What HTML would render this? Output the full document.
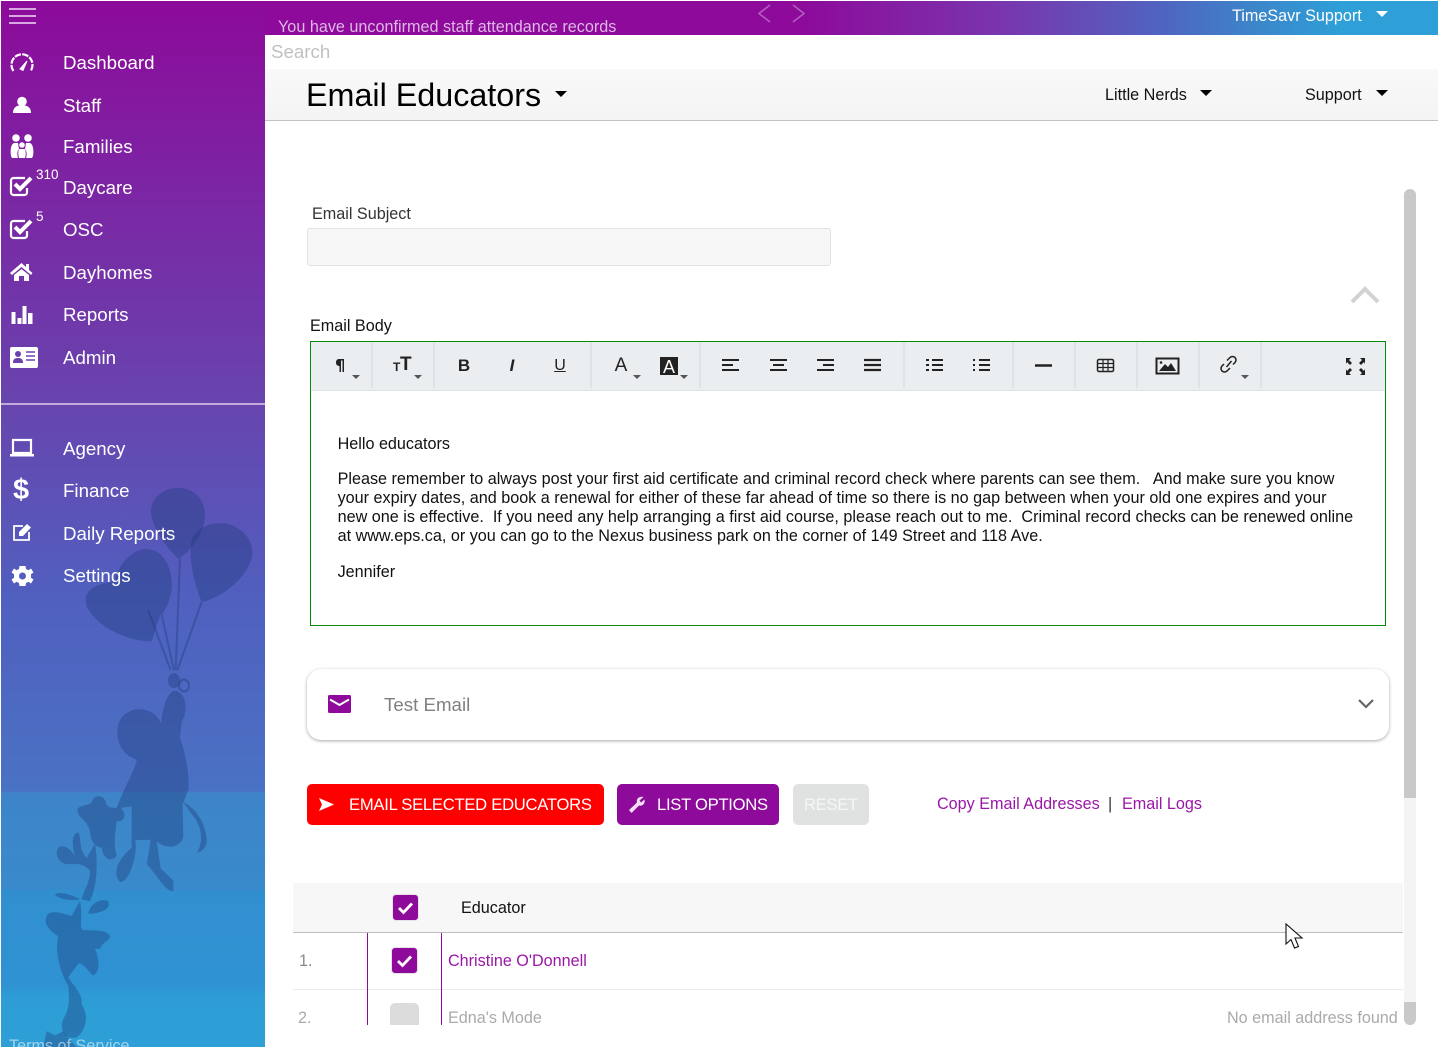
<!DOCTYPE html>
<html><head><meta charset="utf-8"><title>Email Educators</title>
<style>
html,body{margin:0;padding:0;background:#fff}
body{width:1438px;height:1047px;position:relative;overflow:hidden;font-family:"Liberation Sans",Arial,sans-serif;color:#111}
.a,.t{position:absolute}
.t{white-space:pre;line-height:20px;font-size:16.18px}
#side{position:absolute;left:1px;top:1px;width:264px;height:1046px;overflow:hidden;background:linear-gradient(180deg,#8d0a9a 0,#6844ae 400px,#5060bf 600px,#4a72c4 790px,#3e84c9 792px,#398acb 888px,#318fd0 890px,#2f92d2 985px,#2e9dd6 995px,#2e9fd7 1046px)}
#top{position:absolute;left:1px;top:1px;width:1437px;height:34px;background:linear-gradient(90deg,#8d0a9a 0,#8d0a9a 800px,#7a35ad 1000px,#4f64c0 1160px,#3d84c9 1250px,#2e9fd7 1340px)}
.m{color:#fff;font-size:18.72px;left:63px}
.d{position:absolute;width:0;height:0;border-left:6px solid transparent;border-right:6px solid transparent;border-top:6px solid #000}
.sep{position:absolute;top:342px;height:46px;width:2px;background:#dde3e6}
.tb{position:absolute;line-height:20px;color:#222;text-align:center;white-space:pre}
.car{position:absolute;width:0;height:0;border-left:4px solid transparent;border-right:4px solid transparent;border-top:4px solid #555;top:375px}
.cb{position:absolute;width:27px;height:27px;background:#8d0a9a;border-radius:4px;border:1px solid #e8e0ea;box-sizing:border-box}
.b{position:absolute;left:337.6px;font-size:16.18px;line-height:19px;color:#111;white-space:pre}
</style></head><body>
<div id="top"></div>
<div id="side"></div>

<!-- silhouette -->
<svg class="a" style="left:0;top:0" width="265" height="1047" viewBox="0 0 265 1047">
<g transform="translate(0,400) scale(0.3333,0.4126)" fill="#1e3a78" fill-opacity=".38" stroke="none">
<path d="M535 385C490 350 450 300 453 265C458 230 500 213 535 213C580 213 615 240 615 280C615 320 570 370 535 385Z"/>
<path d="M605 490C580 440 565 380 575 340C590 305 640 295 680 300C730 310 760 340 757 375C750 420 680 475 605 490Z"/>
<path d="M455 585C380 585 290 550 260 500C245 460 290 445 345 440C355 390 410 355 450 362C500 370 520 420 515 460C510 490 490 520 480 522Z"/>
<g stroke="#1e3a78" stroke-opacity=".38" stroke-width="6" fill="none"><path d="M445 510L512 655M485 520L522 655M540 385L527 655M605 490L532 655"/><ellipse cx="552" cy="692" rx="15" ry="14"/></g>
<circle cx="522" cy="680" r="18"/>
<path d="M352 800C355 760 400 745 430 750C465 755 480 775 484 785C486 745 505 700 530 705C560 715 565 750 545 780L540 820C555 850 570 910 565 945L548 980L550 1060C540 1085 500 1090 470 1070L482 1135L520 1165L520 1190C500 1195 470 1150 440 1125L452 1068C440 1062 420 1070 405 1065C415 1095 390 1170 360 1168C340 1150 345 1120 395 1085L395 985L350 990C370 940 405 900 410 872C370 860 350 835 352 800Z"/>
<path d="M550 975C590 990 620 1030 620 1070C618 1090 600 1095 590 1098C605 1080 610 1050 590 1020Z"/>
<path d="M232 995C235 980 265 985 275 975C280 955 310 955 318 975C322 995 350 985 365 990C385 1010 365 1025 350 1020C345 1050 340 1080 350 1105C335 1120 310 1115 305 1085C290 1085 270 1070 270 1045C260 1015 235 1015 232 995Z"/>
<path d="M285 1075C295 1130 290 1180 270 1215L245 1210C255 1180 270 1170 270 1140C245 1120 225 1125 205 1125C180 1125 165 1105 172 1090C180 1075 205 1080 225 1105C215 1075 215 1050 235 1048C245 1060 235 1090 260 1110L285 1075Z"/>
<path d="M240 1210C215 1215 180 1210 165 1200C170 1190 205 1195 240 1210ZM265 1245C270 1220 305 1205 325 1215C335 1235 300 1245 265 1245Z"/>
<path d="M240 1215C250 1250 235 1280 250 1285C290 1285 325 1285 330 1300C325 1315 310 1310 300 1330L285 1330C300 1360 300 1385 280 1395C260 1380 250 1365 235 1365C225 1380 205 1395 205 1400C220 1420 250 1440 245 1465C270 1495 255 1530 230 1545C200 1550 175 1530 190 1500C205 1480 210 1460 205 1420C175 1380 165 1330 175 1300C145 1285 125 1265 145 1245C170 1235 200 1250 215 1250Z"/>
<path d="M130 1568L140 1530L165 1540L190 1530L220 1560L230 1568Z"/>
</g></svg>

<!-- hamburger -->
<svg class="a" style="left:9px;top:8px" width="28" height="17"><path d="M0 1h27M0 8h27M0 15h27" stroke="#d9a8e2" stroke-width="2"/></svg>

<!-- sidebar items -->
<div class="t m" style="top:53px">Dashboard</div>
<div class="t m" style="top:96px">Staff</div>
<div class="t m" style="top:137px">Families</div>
<div class="t m" style="top:178px">Daycare</div>
<div class="t m" style="top:220px">OSC</div>
<div class="t m" style="top:263px">Dayhomes</div>
<div class="t m" style="top:305px">Reports</div>
<div class="t m" style="top:348px">Admin</div>
<div class="t m" style="top:439px">Agency</div>
<div class="t m" style="top:481px">Finance</div>
<div class="t m" style="top:524px">Daily Reports</div>
<div class="t m" style="top:566px">Settings</div>
<div class="t" style="left:36px;top:165px;color:#fff;font-size:13.5px">310</div>
<div class="t" style="left:36px;top:207px;color:#fff;font-size:13.5px">5</div>
<div class="a" style="left:1px;top:403px;width:264px;height:2px;background:#c2aadb"></div>
<div class="t" style="left:9px;top:1036px;color:#fff;opacity:.55;font-size:16.2px">Terms of Service</div>

<svg class="a" style="left:0;top:40px" width="50" height="560" viewBox="0 40 50 560" fill="#fff">
<!-- gauge -->
<path d="M13.500 71A10.500 10.500 0 1 1 30.500 71" fill="none" stroke="#fff" stroke-width="2.200" stroke-dasharray="6.500 1.200"/>
<path d="M20 69L27 61L23 70.500Z" stroke="#fff" stroke-width="1"/>
<!-- user -->
<circle cx="22" cy="101.500" r="4.800"/><path d="M13 113C13 108 16 106 19 105.500H25C28 106 31 108 31 113Z"/>
<!-- family -->
<circle cx="16" cy="138" r="3.800"/><circle cx="28" cy="138" r="3.800"/><circle cx="22" cy="145" r="2.800"/>
<path d="M11 156C10 150 11 144 14 143H18L19 149C17 151 17 155 18 158H12ZM33 156C34 150 33 144 30 143H26L25 149C27 151 27 155 26 158H32ZM19 149H25C26 152 26 155 25 158H19C18 155 18 152 19 149Z"/>
<!-- check squares -->
<g fill="none" stroke="#fff"><path d="M27 188V192.500A2.500 2.500 0 0 1 24.500 195H13.500A2.500 2.500 0 0 1 11 192.500V180.500A2.500 2.500 0 0 1 13.500 178H25" stroke-width="2.200"/><path d="M15 184L20 189L31 178" stroke-width="4"/></g>
<g fill="none" stroke="#fff"><path d="M27 231V235.500A2.500 2.500 0 0 1 24.500 238H13.500A2.500 2.500 0 0 1 11 235.500V223.500A2.500 2.500 0 0 1 13.500 221H25" stroke-width="2.200"/><path d="M15 227L20 232L31 221" stroke-width="4"/></g>
<!-- home -->
<path d="M10 273L21.500 263L26 267V264H29V270L32.500 273L31 275L21.500 267L12 275Z"/><path d="M14 275L21.500 269L29 275V281H24V276H19V281H14Z"/>
<!-- bars -->
<path d="M11.500 312H15.500V324H11.500ZM17.500 318H21.500V324H17.500ZM22.500 306H26.500V324H22.500ZM28 313H32.500V324H28Z"/>
<!-- id card -->
<path d="M12 347H36A2 2 0 0 1 38 349V366A2 2 0 0 1 36 368H12A2 2 0 0 1 10 366V349A2 2 0 0 1 12 347Z"/>
<circle cx="18" cy="354" r="3" fill="#6a40ad"/><path d="M13 363C13 359 15 358 18 358C21 358 23 359 23 363Z" fill="#6a40ad"/><path d="M26 352H35M26 356H35M26 360H35" stroke="#6a40ad" stroke-width="1.600"/>
<!-- laptop -->
<path d="M13 440H31V453H13Z" fill="none" stroke="#fff" stroke-width="2.200"/><path d="M10 454H34V456.500H10Z"/>
<!-- edit -->
<path d="M29 532V540H14V526H23" fill="none" stroke="#fff" stroke-width="1.800"/><path d="M19 532L27 524L31 527.500L23 536H19Z"/>
<!-- gear -->
<path fill-rule="evenodd" d="M19.500 566H25.500L26 569L28.500 570.200L31 568.500L33.500 572.500L31 574.300V577.700L33.500 579.500L31 583.500L28.500 581.800L26 583L25.500 586H19.500L19 583L16.500 581.800L14 583.500L11.500 579.500L14 577.700V574.300L11.500 572.500L14 568.500L16.500 570.200L19 569ZM22.500 572.500A3.500 3.500 0 1 0 22.500 579.500A3.500 3.500 0 1 0 22.500 572.500Z"/>
</svg>
<div class="t" style="left:13px;top:480px;color:#fff;font-weight:bold;font-size:29px">$</div>

<!-- top bar -->
<div class="t" style="left:278px;top:17px;color:#dfb6e6;font-size:16.2px">You have unconfirmed staff attendance records</div>
<svg class="a" style="left:755px;top:3px" width="52" height="20"><path d="M15 2L4 10.500L15 19M38 2L49 10.500L38 19" fill="none" stroke="#b25cc0" stroke-width="1.600"/></svg>
<div class="t" style="left:1232px;top:6px;color:#fff">TimeSavr Support</div>
<div class="d" style="left:1376px;top:11px;border-top-color:#fff"></div>

<!-- search & header -->
<div class="t" style="left:271px;top:42px;color:#c0c0c0;font-size:18.72px">Search</div>
<div class="a" style="left:265px;top:69px;width:1173px;height:51px;background:linear-gradient(180deg,#f9f9f9,#f4f4f4);border-bottom:1px solid #c2c2c2"></div>
<div class="t" style="left:306px;top:85px;font-size:32.3px;color:#000">Email Educators</div>
<div class="d" style="left:555px;top:91px"></div>
<div class="t" style="left:1105px;top:85px;color:#111">Little Nerds</div>
<div class="d" style="left:1200px;top:90px"></div>
<div class="t" style="left:1305px;top:85px;color:#111">Support</div>
<div class="d" style="left:1376px;top:90px"></div>

<!-- scrollbar -->
<div class="a" style="left:1404px;top:189px;width:12px;height:836px;background:#f4f4f4;border-radius:6px"></div>
<div class="a" style="left:1404px;top:189px;width:12px;height:609px;background:#c9c9c9;border-radius:6px 6px 0 0"></div>
<div class="a" style="left:1404px;top:1002px;width:12px;height:23px;background:#c9c9c9;border-radius:0 0 6px 6px"></div>

<!-- subject -->
<div class="t" style="left:312px;top:204px;color:#333">Email Subject</div>
<div class="a" style="left:307px;top:228px;width:524px;height:38px;box-sizing:border-box;background:#f7f7f7;border:1px solid #e2e2e2;border-radius:3px"></div>
<svg class="a" style="left:1350px;top:286px" width="30" height="18"><path d="M2 16L15 3L28 16" fill="none" stroke="#d2d2d2" stroke-width="4"/></svg>

<!-- editor -->
<div class="t" style="left:310px;top:316px;color:#111">Email Body</div>
<div class="a" style="left:310px;top:341px;width:1076px;height:285px;box-sizing:border-box;border:1px solid #0a860a;background:#fff"></div>
<div class="a" style="left:311px;top:342px;width:1074px;height:49px;box-sizing:border-box;background:#ebeef0;border-bottom:1px solid #dde2e4"></div>
<div class="sep" style="left:371px"></div><div class="sep" style="left:433px"></div><div class="sep" style="left:590px"></div><div class="sep" style="left:699px"></div><div class="sep" style="left:903px"></div><div class="sep" style="left:1012px"></div><div class="sep" style="left:1074px"></div><div class="sep" style="left:1136px"></div><div class="sep" style="left:1198px"></div><div class="sep" style="left:1260px"></div>

<svg class="a" style="left:330px;top:355px" width="20" height="20"><path d="M7 4H14V17H12.500V5.500H11V17H9.500V11C7 11 6 9.500 6 7.500C6 5.500 7 4 9 4Z" fill="#222"/></svg>
<div class="tb" style="left:393px;top:356px;font-weight:bold;font-size:12px;line-height:22px">T</div>
<div class="tb" style="left:400px;top:355px;font-weight:bold;font-size:19px">T</div>
<div class="tb" style="left:454px;top:356px;width:20px;font-weight:bold;font-size:17px">B</div>
<div class="tb" style="left:502px;top:356px;width:20px;font-style:italic;font-weight:bold;font-size:17px">I</div>
<div class="tb" style="left:550px;top:356px;width:20px;font-size:16px;text-decoration:underline">U</div>
<div class="tb" style="left:611px;top:356px;width:20px;font-size:19px">A</div>
<div class="a" style="left:660px;top:357px;width:18px;height:18px;background:#222"></div>
<div class="tb" style="left:659px;top:357px;width:20px;font-size:18px;color:#fff">A</div>
<div class="car" style="left:352px"></div><div class="car" style="left:414px"></div><div class="car" style="left:633px"></div><div class="car" style="left:680px"></div><div class="car" style="left:1241px"></div>

<svg class="a" style="left:700px;top:342px" width="700" height="48" fill="none" stroke="#222" stroke-width="2">
<path d="M22 18H39M22 23H33M22 28H39"/>
<path d="M70 18H87M73 23H84M70 28H87"/>
<path d="M117 18H134M123 23H134M117 28H134"/>
<path d="M164 18H181M164 23H181M164 28H181" stroke-width="2.200"/>
<path d="M226 18H229M226 23H229M226 28H229M232 18H243M232 23H243M232 28H243"/>
<path d="M273 18H275M273 23H275M273 28H275M279 18H290M279 23H290M279 28H290"/>
<path d="M335 23.500H352" stroke-width="2.600"/>
<rect x="397.500" y="17.500" width="16" height="12" rx="1.500" stroke-width="1.500"/><path d="M398 21.500H413M398 25.500H413M403 18V29M408 18V29" stroke-width="1.200"/>
<rect x="456.500" y="16.500" width="22" height="15" stroke-width="2"/><path d="M459 29L465 22L468 25L471 21L476 29Z" fill="#222" stroke="none"/><circle cx="461" cy="20.500" r="1.300" fill="#222" stroke="none"/>
<path d="M527 18.500L530 15.500Q532.500 13.500 535 15.500Q537 18 535 20.500L533 22.500M530 26L527 29Q524.500 31 522 29Q520 26.500 522 24L524 22M526.500 25L531.500 19" stroke-width="1.500"/>
<g fill="#222" stroke="none"><path d="M646 16H651L649 18L652 21L650 23L647 20L646 22ZM665 16H660L662 18L659 21L661 23L664 20L665 22ZM646 33H651L649 31L652 28L650 26L647 29L646 27ZM665 33H660L662 31L659 28L661 26L664 29L665 27Z"/></g>
</svg>

<div class="b" style="top:435px">Hello educators</div>
<div class="b" style="top:470px">Please remember to always post your first aid certificate and criminal record check where parents can see them.   And make sure you know
your expiry dates, and book a renewal for either of these far ahead of time so there is no gap between when your old one expires and your
new one is effective.  If you need any help arranging a first aid course, please reach out to me.  Criminal record checks can be renewed online
at www.eps.ca, or you can go to the Nexus business park on the corner of 149 Street and 118 Ave.</div>
<div class="b" style="top:563px">Jennifer</div>

<!-- test email -->
<div class="a" style="left:307px;top:669px;width:1082px;height:71px;box-sizing:border-box;background:#fff;border-radius:14px;box-shadow:0 1px 3px rgba(0,0,0,.35)"></div>
<svg class="a" style="left:328px;top:695px" width="24" height="19"><rect width="23" height="18" rx="1.500" fill="#8d0a9a"/><path d="M2 4.500L11.500 10L21 4.500" fill="none" stroke="#fff" stroke-width="2"/></svg>
<div class="t" style="left:384px;top:695px;font-size:18.72px;color:#808080">Test Email</div>
<svg class="a" style="left:1357px;top:697px" width="18" height="13"><path d="M2 3L9 10L16 3" fill="none" stroke="#666" stroke-width="2.200"/></svg>

<!-- buttons -->
<div class="a" style="left:307px;top:784px;width:297px;height:41px;background:#f00;border-radius:5px"></div>
<svg class="a" style="left:319px;top:797px" width="17" height="15"><path d="M0 1L15 7.500L0 14L3 7.500Z" fill="#fff"/></svg>
<div class="t" style="left:349px;top:795px;color:#fff;font-size:16.6px;letter-spacing:-.25px">EMAIL SELECTED EDUCATORS</div>
<div class="a" style="left:617px;top:784px;width:162px;height:41px;background:#8d0a9a;border-radius:5px"></div>
<svg class="a" style="left:628px;top:796px" width="18" height="18"><path d="M1 14L9 6.500C8 3 11 0 15.500 1L11.500 4.500L13 6.500L16.500 3.500C17.500 8 14 10.500 11 9.500L3.500 17Z" fill="#f2dff5"/></svg>
<div class="t" style="left:657px;top:795px;color:#fff;font-size:16.6px;letter-spacing:-.27px">LIST OPTIONS</div>
<div class="a" style="left:793px;top:784px;width:76px;height:41px;background:#e0e1e1;border-radius:5px"></div>
<div class="t" style="left:804px;top:795px;color:#f6f6f6;font-size:16.6px;letter-spacing:-.3px">RESET</div>
<div class="t" style="left:937px;top:794px;color:#9b17a8">Copy Email Addresses</div>
<div class="t" style="left:1108px;top:794px;color:#333">|</div>
<div class="t" style="left:1122px;top:794px;color:#9b17a8">Email Logs</div>

<!-- table -->
<div class="a" style="left:293px;top:883px;width:1110px;height:49px;background:#f7f7f7;border-bottom:1px solid #bdbdbd"></div>
<div class="a" style="left:293px;top:989px;width:1110px;height:1px;background:#eaeaea"></div>
<div class="a" style="left:367px;top:933px;width:1px;height:92px;background:#8d0a9a"></div>
<div class="a" style="left:441px;top:933px;width:1px;height:92px;background:#8d0a9a"></div>
<div class="cb" style="left:392px;top:894px"></div>
<svg class="a" style="left:392px;top:894px" width="27" height="27"><path d="M7 14L11.500 18.500L20 9.500" fill="none" stroke="#fff" stroke-width="2.800"/></svg>
<div class="t" style="left:461px;top:898px;color:#111">Educator</div>
<div class="t" style="left:299px;top:951px;color:#888">1.</div>
<div class="cb" style="left:391px;top:947px"></div>
<svg class="a" style="left:391px;top:947px" width="27" height="27"><path d="M7 14L11.500 18.500L20 9.500" fill="none" stroke="#fff" stroke-width="2.800"/></svg>
<div class="t" style="left:448px;top:951px;color:#9b17a8">Christine O'Donnell</div>
<div class="t" style="left:298px;top:1008px;color:#aaa">2.</div>
<div class="a" style="left:390px;top:1003px;width:29px;height:22px;background:#dcdcdc;border-radius:5px 5px 0 0"></div>
<div class="t" style="left:448px;top:1008px;color:#aaa">Edna's Mode</div>
<div class="t" style="left:1227px;top:1008px;color:#aaa">No email address found</div>
<div class="a" style="left:293px;top:1025px;width:1110px;height:22px;background:#fff"></div>

<!-- cursor -->
<svg class="a" style="left:1284px;top:922px" width="22" height="30"><path d="M2 2V22L7 17.500L10.500 26L14.500 24.500L11 16H18Z" fill="#fff" stroke="#111" stroke-width="1.100"/></svg>
</body></html>
